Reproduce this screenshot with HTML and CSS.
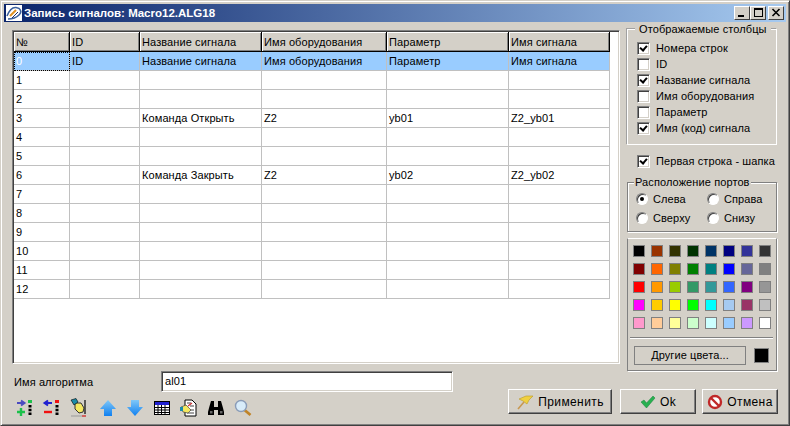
FILE: index.html
```html
<!DOCTYPE html>
<html lang="ru">
<head>
  <meta charset="UTF-8" />
  <title>Запись сигналов</title>
  <link rel="stylesheet" href="styles.css">
</head>
<body>
  <div class="window">
    <div class="titlebar">
      <svg class="app-icon" width="16" height="16" viewBox="0 0 16 16">
        <rect width="16" height="16" fill="#fff"/>
        <path d="M1 11C3 6 6 2 10 2.500C13 3 14 4 14.500 5M2 14C6 14 10 13 13 10C15 8 15 6 14 5" fill="none" stroke="#3a5f9c" stroke-width="1.600"/>
        <path d="M4 11L10 5" stroke="#e09020" stroke-width="2"/>
        <path d="M6 13L12 7" stroke="#1c2c60" stroke-width="1"/>
      </svg>
      <span class="title-text">Запись сигналов: Macro12.ALG18</span>
      <div class="caption-btns">
        <div class="caption-btn"><svg width="12" height="10" viewBox="0 0 12 10"><rect x="2" y="7" width="6" height="2"/></svg></div>
        <div class="caption-btn"><svg width="12" height="10" viewBox="0 0 12 10"><path d="M2 0H11V9H2Z M3 2V8H10V2Z" fill-rule="evenodd"/></svg></div>
        <div class="caption-btn close"><svg width="12" height="10" viewBox="0 0 12 10"><path d="M2.500 1 L9.500 8 M9.500 1 L2.500 8" stroke="#000" stroke-width="1.600"/></svg></div>
      </div>
    </div>

    <div class="body">
      <div class="main">
        <div class="grid">
          <table>
            <colgroup>
              <col class="c0"><col class="c1"><col class="c2"><col class="c3"><col class="c4"><col class="c5">
            </colgroup>
            <thead>
              <tr><th>№</th><th>ID</th><th>Название сигнала</th><th>Имя оборудования</th><th>Параметр</th><th>Имя сигнала</th></tr>
            </thead>
            <tbody>
              <tr class="selected"><td class="focus">0</td><td>ID</td><td>Название сигнала</td><td>Имя оборудования</td><td>Параметр</td><td>Имя сигнала</td></tr>
              <tr><td>1</td><td></td><td></td><td></td><td></td><td></td></tr>
              <tr><td>2</td><td></td><td></td><td></td><td></td><td></td></tr>
              <tr><td>3</td><td></td><td>Команда Открыть</td><td>Z2</td><td>yb01</td><td>Z2_yb01</td></tr>
              <tr><td>4</td><td></td><td></td><td></td><td></td><td></td></tr>
              <tr><td>5</td><td></td><td></td><td></td><td></td><td></td></tr>
              <tr><td>6</td><td></td><td>Команда Закрыть</td><td>Z2</td><td>yb02</td><td>Z2_yb02</td></tr>
              <tr><td>7</td><td></td><td></td><td></td><td></td><td></td></tr>
              <tr><td>8</td><td></td><td></td><td></td><td></td><td></td></tr>
              <tr><td>9</td><td></td><td></td><td></td><td></td><td></td></tr>
              <tr><td>10</td><td></td><td></td><td></td><td></td><td></td></tr>
              <tr><td>11</td><td></td><td></td><td></td><td></td><td></td></tr>
              <tr><td>12</td><td></td><td></td><td></td><td></td><td></td></tr>
            </tbody>
          </table>
        </div>

        <div class="right">
          <div class="group columns">
            <span class="legend legend-columns">Отображаемые столбцы</span>
            <label class="check-row"><span class="check on"></span>Номера строк</label>
            <label class="check-row"><span class="check"></span>ID</label>
            <label class="check-row"><span class="check on"></span>Название сигнала</label>
            <label class="check-row"><span class="check"></span>Имя оборудования</label>
            <label class="check-row"><span class="check"></span>Параметр</label>
            <label class="check-row"><span class="check on"></span>Имя (код) сигнала</label>
          </div>
          <label class="check-row first-row"><span class="check on"></span>Первая строка - шапка</label>
          <div class="group ports">
            <span class="legend">Расположение портов</span>
            <div class="radio-grid">
              <label class="radio-row"><span class="radio on"></span>Слева</label>
              <label class="radio-row"><span class="radio"></span>Справа</label>
              <label class="radio-row"><span class="radio"></span>Сверху</label>
              <label class="radio-row"><span class="radio"></span>Снизу</label>
            </div>
          </div>
          <div class="group palette">
            <div class="swatches" id="swatches"></div>
            <div class="palette-line"></div>
            <div class="palette-bottom">
              <div class="more-colors">Другие цвета...</div>
              <div class="swatch-current"></div>
            </div>
          </div>
        </div>
      </div>

      <div class="footer">
        <div class="footer-left">
          <div class="name-row">
            <span class="name-label">Имя алгоритма</span>
            <div class="name-input">al01</div>
          </div>
          <div class="tools">
            <svg width="20" height="20" viewBox="0 0 20 20"><path d="M2 5H9M6 2.500L9.500 5L6 7.500" fill="none" stroke="#4a4ac0" stroke-width="2"/><path d="M2 14H10M6 10V18" stroke="#1cc04a" stroke-width="2.400"/><rect x="13" y="2" width="4" height="3" fill="#1cc04a"/><path d="M15 7V18" stroke="#000" stroke-width="3" stroke-dasharray="2.400 1.400"/></svg>
            <svg width="20" height="20" viewBox="0 0 20 20"><path d="M3 5H10M6 2.500L2.500 5L6 7.500" fill="none" stroke="#2020d0" stroke-width="2"/><path d="M2 14H10" stroke="#f01010" stroke-width="2.400"/><rect x="13" y="2" width="4" height="3" fill="#f01010"/><path d="M15 7V18" stroke="#000" stroke-width="3" stroke-dasharray="2.400 1.400"/></svg>
            <svg width="20" height="20" viewBox="0 0 20 20"><path d="M6 5L12 5L15 10L14 14L10 15L6 11Z" fill="#f4e860" stroke="#333"/><path d="M2 2L7 0.500L9 4L5 7Z" fill="#1c8ca8" stroke="#000" stroke-width=".6"/><path d="M16 2V16" stroke="#222" stroke-width="1.400"/><path d="M2 18H13" stroke="#999"/><path d="M13 18H17" stroke="#d03030" stroke-width="1.400"/></svg>
            <svg class="arrow" width="20" height="20" viewBox="0 0 20 20"><defs><linearGradient id="up" x1="0" y1="0" x2="0" y2="1"><stop offset="0" stop-color="#80c8f8"/><stop offset="1" stop-color="#1080f0"/></linearGradient></defs><path d="M10 2L18 11H14V18H6V11H2Z" fill="url(#up)"/></svg>
            <svg width="20" height="20" viewBox="0 0 20 20"><path d="M10 18L18 9H14V2H6V9H2Z" fill="url(#up)"/></svg>
            <svg width="20" height="20" viewBox="0 0 20 20"><rect x="2.500" y="3.500" width="15" height="13" fill="#fff" stroke="#000"/><rect x="3" y="4" width="14" height="3" fill="#2020d0"/><path d="M3 9.500H17M3 12H17M3 14.500H17M6 7V16M9.500 7V16M13 7V16" stroke="#000"/></svg>
            <svg width="20" height="20" viewBox="0 0 20 20"><path d="M6 2H13L17 6V18H6Z" fill="#fff" stroke="#000"/><path d="M8 5H12M11 8H15M11 12H15M8 15H15" stroke="#444"/><path d="M2 9L7 7L12 12L9 15L4 14Z" fill="#f4e860" stroke="#444" stroke-width=".7"/><path d="M1 9H4V13H1Z" fill="#1c8ca8"/><path d="M9 8L13 5" stroke="#d03030" stroke-width="1.200"/></svg>
            <svg width="20" height="20" viewBox="0 0 20 20"><path d="M5 3H8V9H12V3H15L17 10L18 14V17H12V12H8V17H2V14L3 10Z"/><rect x="4" y="13" width="2.500" height="2.500" fill="#666"/><rect x="14" y="13" width="2.500" height="2.500" fill="#666"/></svg>
            <svg width="20" height="20" viewBox="0 0 20 20"><path d="M11.500 12L17.500 17" stroke="#c08428" stroke-width="2.800"/><circle cx="8" cy="8" r="5.500" fill="#d8ecfa" stroke="#8a9cb8" stroke-width="1.400"/></svg>
          </div>
        </div>
        <div class="actions">
          <button class="btn apply">
            <svg width="18" height="18" viewBox="0 0 18 18"><path d="M3 6L10 3L17 3L13 7L11 11L7 8Z" fill="#f0d040" stroke="#b89828" stroke-width=".6"/><path d="M8 9L2 16" stroke="#c89850" stroke-width="1.600"/></svg>
            <span>Применить</span>
          </button>
          <button class="btn ok">
            <svg width="16" height="14" viewBox="0 0 16 14"><path d="M1 7L4 5L6.500 8L13 1L15 3L6.500 13Z" fill="#28b050" stroke="#188038" stroke-width=".5"/></svg>
            <span>Ok</span>
          </button>
          <button class="btn cancel">
            <svg width="16" height="16" viewBox="0 0 16 16"><circle cx="8" cy="8" r="6" fill="#fff" stroke="#c02828" stroke-width="2.400"/><path d="M4 4L12 12" stroke="#c02828" stroke-width="2.400"/></svg>
            <span>Отмена</span>
          </button>
        </div>
      </div>
    </div>
  </div>
  <script>
    const colors = [
      '#000000','#993300','#333300','#003300','#003366','#000080','#333399','#333333',
      '#800000','#ff6600','#808000','#008000','#008080','#0000ff','#666699','#808080',
      '#ff0000','#ff9900','#99cc00','#339966','#339999','#3366ff','#800080','#969696',
      '#ff00ff','#ffcc00','#ffff00','#00ff00','#00ffff','#a6caf0','#993366','#c0c0c0',
      '#ff99cc','#ffcc99','#ffff99','#ccffcc','#ccffff','#99ccff','#cc99ff','#ffffff'
    ];
    const box = document.getElementById('swatches');
    colors.forEach((c) => {
      const div = document.createElement('div');
      div.className = 'swatch';
      div.style.background = c;
      box.appendChild(div);
    });
  </script>
</body>
</html>
```

FILE: styles.css
```css
html, body {
  margin: 0;
  padding: 0;
  height: 100%;
  overflow: hidden;
  background: #d4d0c8;
  color: #000;
  font-family: "Liberation Sans", Arial, sans-serif;
  font-size: 11px;
  letter-spacing: 0.1px;
}
.window {
  box-sizing: border-box;
  width: 790px;
  height: 426px;
  background: #d4d0c8;
  padding: 3px;
  border: 1px solid;
  border-color: #d4d0c8 #404040 #404040 #d4d0c8;
  box-shadow: inset 1px 1px 0 #fff, inset -1px -1px 0 #808080;
  display: flex;
  flex-direction: column;
}
.titlebar {
  height: 18px;
  flex: none;
  display: flex;
  align-items: center;
  padding: 0 2px;
  background: linear-gradient(to right, #0a246a, #a6caf0);
  color: #fff;
  font-weight: 700;
  font-size: 11.5px;
  letter-spacing: 0;
}
.app-icon {
  margin-right: 2px;
  flex: none;
}
.title-text {
  flex: 1;
}
.caption-btns {
  display: flex;
}
.caption-btn {
  box-sizing: border-box;
  width: 16px;
  height: 14px;
  background: #d4d0c8;
  border: 1px solid;
  border-color: #fff #404040 #404040 #fff;
  display: flex;
  align-items: center;
  justify-content: center;
}
.caption-btn.close {
  margin-left: 2px;
}
.body {
  flex: 1;
  display: flex;
  flex-direction: column;
  min-height: 0;
  padding: 8px 8px 0 8px;
}
.main {
  display: flex;
  height: 341px;
  flex: none;
}

/* table */
.grid {
  box-sizing: border-box;
  width: 608px;
  height: 334px;
  flex: none;
  background: #fff;
  border: 1px solid;
  border-color: #808080 #fff #fff #808080;
  box-shadow: inset 1px 1px 0 #404040, inset -1px -1px 0 #d4d0c8;
  padding: 1px 0 0 1px;
  overflow: hidden;
}
table {
  border-collapse: separate;
  border-spacing: 0;
  table-layout: fixed;
  width: 596px;
}
.c0 { width: 56px; }
.c1 { width: 70px; }
.c2 { width: 122px; }
.c3 { width: 125px; }
.c4 { width: 122px; }
.c5 { width: 101px; }
th, td {
  box-sizing: border-box;
  height: 19px;
  padding: 0 2px;
  font-weight: 400;
  text-align: left;
  white-space: nowrap;
  overflow: hidden;
  border-right: 1px solid #c0c0c0;
  border-bottom: 1px solid #c0c0c0;
}
th {
  height: 20px;
  background: #d4d0c8;
  border-color: #000;
  box-shadow: inset 1px 1px 0 #fff, inset -1px -1px 0 #808080;
}
.selected td {
  background: #99ccff;
}
.selected .focus {
  color: #fff;
  outline: 1px dotted #000;
  outline-offset: -1px;
}

/* right column */
.right {
  margin-left: 7px;
  margin-top: -1px;
  display: flex;
  flex-direction: column;
}
.group {
  box-sizing: border-box;
  position: relative;
  width: 150px;
  border: 1px solid #808080;
  box-shadow: 1px 1px 0 #fff, inset 1px 1px 0 #fff;
}
.legend {
  position: absolute;
  top: -7px;
  left: 6px;
  background: #d4d0c8;
  padding: 0 1px;
  line-height: 13px;
  white-space: nowrap;
}
.legend-columns {
  left: 7px;
  padding: 0 4px;
}
.columns {
  height: 116px;
  padding: 10px 0 0 9px;
  border-color: #fff;
  box-shadow: -1px -1px 0 #a0a0a0;
}
.check-row {
  display: flex;
  align-items: center;
  height: 16px;
  gap: 6px;
}
.check {
  box-sizing: border-box;
  width: 13px;
  height: 13px;
  flex: none;
  background: #fff;
  border: 1px solid;
  border-color: #808080 #fff #fff #808080;
  box-shadow: inset 1px 1px 0 #404040, inset -1px -1px 0 #d4d0c8;
  position: relative;
}
.check.on::after {
  content: "";
  position: absolute;
  left: 3px;
  top: 1px;
  width: 3px;
  height: 5px;
  border: solid #000;
  border-width: 0 2px 2px 0;
  transform: rotate(40deg);
}
.first-row {
  margin: 8px 0 0 10px;
}
.ports {
  height: 50px;
  margin-top: 13px;
}
.radio-grid {
  display: grid;
  grid-template-columns: 71px 71px;
  grid-auto-rows: 19px;
  padding: 6px 0 0 8px;
}
.radio-row {
  display: flex;
  align-items: center;
  gap: 5px;
}
.radio {
  box-sizing: border-box;
  width: 12px;
  height: 12px;
  flex: none;
  border-radius: 50%;
  background: #fff;
  border: 1px solid;
  border-color: #808080 #fff #fff #808080;
  box-shadow: inset 1px 1px 0 #404040;
  display: flex;
  align-items: center;
  justify-content: center;
}
.radio.on::after {
  content: "";
  width: 4px;
  height: 4px;
  border-radius: 50%;
  background: #000;
}

/* colours */
.palette {
  height: 133px;
  margin-top: 6px;
  padding-top: 6px;
  border-top-color: #fff;
  box-shadow: 1px 1px 0 #fff;
}
.swatches {
  display: grid;
  grid-template-columns: repeat(8, 18px);
  grid-auto-rows: 18px;
  padding-left: 5px;
}
.swatch {
  box-sizing: border-box;
  width: 12px;
  height: 12px;
  border: 1px solid #808080;
}
.palette-line {
  height: 1px;
  margin: 2px 3px 0 2px;
  background: #808080;
  box-shadow: 0 1px 0 #fff;
}
.palette-bottom {
  display: flex;
  align-items: center;
  gap: 8px;
  margin-top: 8px;
  padding-left: 6px;
}
.more-colors {
  box-sizing: border-box;
  width: 112px;
  height: 19px;
  line-height: 17px;
  text-align: center;
  border: 1px solid #808080;
}
.swatch-current {
  box-sizing: border-box;
  width: 15px;
  height: 15px;
  background: #000;
  border: 1px solid #808080;
}

/* footer */
.footer {
  display: flex;
  justify-content: space-between;
}
.name-row {
  display: flex;
  align-items: center;
  height: 21px;
}
.name-label {
  box-sizing: border-box;
  width: 149px;
  padding-left: 2px;
}
.name-input {
  box-sizing: border-box;
  width: 292px;
  height: 21px;
  line-height: 19px;
  padding-left: 3px;
  background: #fff;
  border: 1px solid;
  border-color: #808080 #fff #fff #808080;
  box-shadow: inset 1px 1px 0 #404040, inset -1px -1px 0 #d4d0c8;
}
.tools {
  display: flex;
  gap: 7px;
  margin-top: 6px;
  padding-left: 3px;
}
.tools .arrow {
  margin-left: 2px;
}
.actions {
  display: flex;
  gap: 6px;
  margin-top: 18px;
}
.btn {
  box-sizing: border-box;
  height: 25px;
  padding: 0;
  background: #d4d0c8;
  border: 1px solid;
  border-color: #fff #404040 #404040 #fff;
  box-shadow: inset -1px -1px 0 #808080;
  font: inherit;
  font-size: 12px;
  letter-spacing: 0.4px;
  display: flex;
  align-items: center;
  justify-content: center;
  gap: 4px;
}
.apply {
  width: 104px;
  margin-right: 2px;
}
.ok { width: 76px; }
.cancel { width: 76px; }
```
